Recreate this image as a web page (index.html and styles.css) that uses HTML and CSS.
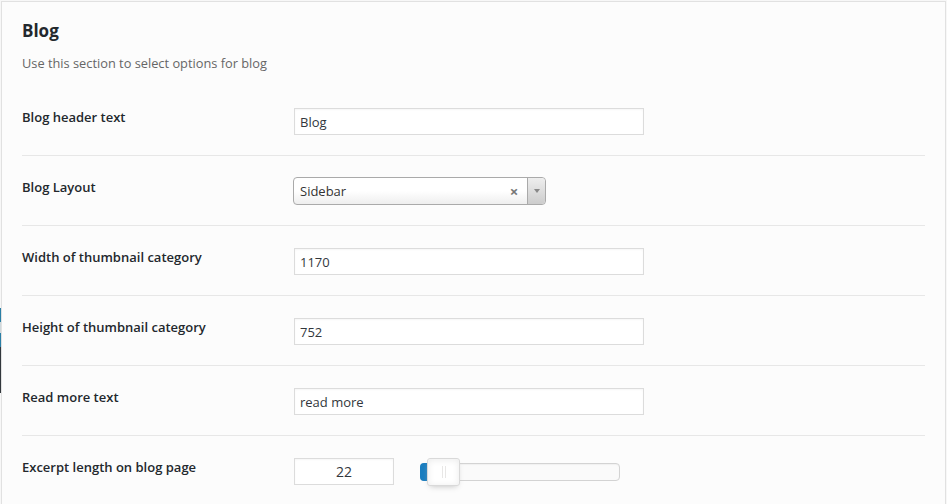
FILE: index.html
```html
<!DOCTYPE html>
<html lang="en">
<head>
<meta charset="utf-8">
<title>Blog options</title>
<link rel="stylesheet" href="styles.css">
</head>
<body>
<div class="admin-edge" aria-hidden="true">
  <span class="edge-blue"></span>
  <span class="edge-gap"></span>
  <span class="edge-blue"></span>
  <span class="edge-dark"></span>
</div>
<div class="panel">
  <h2 class="section-title">Blog</h2>
  <p class="section-desc">Use this section to select options for blog</p>
  <div class="form-table">
    <div class="row">
      <div class="label">Blog header text</div>
      <div class="field"><input class="text-input" type="text" value="Blog"></div>
    </div>
    <div class="row">
      <div class="label">Blog Layout</div>
      <div class="field">
        <div class="select2">
          <span class="select2-value">Sidebar</span>
          <span class="select2-clear">&#215;</span>
          <span class="select2-arrow"><span class="tri"></span></span>
        </div>
      </div>
    </div>
    <div class="row">
      <div class="label">Width of thumbnail category</div>
      <div class="field"><input class="text-input" type="text" value="1170"></div>
    </div>
    <div class="row">
      <div class="label">Height of thumbnail category</div>
      <div class="field"><input class="text-input" type="text" value="752"></div>
    </div>
    <div class="row">
      <div class="label">Read more text</div>
      <div class="field"><input class="text-input" type="text" value="read more"></div>
    </div>
    <div class="row">
      <div class="label">Excerpt length on blog page</div>
      <div class="field slider-field">
        <input class="num-input" type="text" value="22">
        <div class="slider">
          <div class="slider-connect"></div>
          <div class="slider-handle"><span class="grip"></span></div>
        </div>
      </div>
    </div>
  </div>
</div>
</body>
</html>
```
FILE: styles.css
```css
* { box-sizing: border-box; }
html, body { margin: 0; padding: 0; }
body {
  background: #f7f7f7;
  font-family: "Segoe UI", "Open Sans", "Noto Sans", sans-serif;
  color: #23282d;
  height: 504px;
  overflow: hidden;
  position: relative;
}
.admin-edge {
  position: absolute;
  left: 0;
  top: 308px;
  width: 1px;
  display: flex;
  flex-direction: column;
}
.edge-blue { display: block; height: 14px; background: #2a7fa6; }
.edge-gap { display: block; height: 11px; background: #cfd8dc; }
.edge-dark { display: block; height: 46px; background: #32373c; }
.panel {
  margin: 1px 1px 0 1px;
  border: 1px solid #e1e1e1;
  border-bottom: none;
  background: #fcfcfc;
  padding: 0 20px;
  height: 503px;
  overflow: hidden;
}
.section-title {
  margin: 0;
  padding-top: 17px;
  font-size: 17px;
  line-height: 24px;
  font-weight: 700;
  color: #23282d;
}
.section-desc {
  margin: 0;
  padding-top: 11px;
  font-size: 12.8px;
  line-height: 18px;
  color: #666;
  height: 43px;
}
.row {
  display: flex;
  align-items: flex-start;
  height: 70px;
  border-bottom: 1px solid #e7e7e7;
}
.row:last-child { border-bottom: none; height: auto; }
.label {
  width: 272px;
  flex: none;
  padding-top: 22px;
  font-size: 13px;
  line-height: 18px;
  font-weight: 600;
  color: #23282d;
}
.field { padding-top: 22px; }
.text-input, .num-input {
  display: block;
  width: 350px;
  height: 27px;
  margin: 0;
  padding: 0 5px;
  border: 1px solid #dcdcdc;
  box-shadow: inset 0 1px 2px rgba(0,0,0,0.04);
  background: #fff;
  font-family: inherit;
  font-size: 13px;
  color: #32373c;
  outline: none;
}
.select2 {
  display: flex;
  align-items: center;
  width: 253px;
  height: 28px;
  margin-left: -1px;
  margin-top: -1px;
  border: 1px solid #aaa;
  border-radius: 4px;
  background: linear-gradient(#fff 0%, #fff 50%, #eee 100%);
  font-size: 13px;
  color: #333;
}
.select2-value { flex: 1; padding-left: 6px; }
.select2-clear {
  width: 16px;
  text-align: center;
  color: #777;
  font-weight: 700;
  font-size: 15px;
  line-height: 1;
  margin-right: 5px;
}
.select2-arrow {
  width: 18px;
  align-self: stretch;
  border-left: 1px solid #aaa;
  border-radius: 0 4px 4px 0;
  background: linear-gradient(#eee, #ccc);
  display: flex;
  align-items: center;
  justify-content: center;
}
.tri {
  width: 0; height: 0;
  border-left: 3px solid transparent;
  border-right: 3px solid transparent;
  border-top: 4px solid #888;
}
.slider-field { display: flex; align-items: center; gap: 26px; }
.num-input {
  width: 100px;
  text-align: center;
  font-size: 14px;
}
.slider {
  position: relative;
  width: 200px;
  height: 18px;
  border: 1px solid #d3d3d3;
  border-radius: 4px;
  background: #fafafa;
  box-shadow: inset 0 1px 1px #f0f0f0;
  margin-top: 1px;
}
.slider-connect {
  position: absolute;
  left: -1px; top: -1px; bottom: -1px;
  width: 12px;
  background: #1a7dbf;
  border-radius: 4px 0 0 4px;
}
.slider-handle {
  position: absolute;
  left: 6px;
  top: -6px;
  width: 33px;
  height: 28px;
  border: 1px solid #d9d9d9;
  border-radius: 3px;
  background: #fff;
  box-shadow: inset 0 0 1px #fff, inset 0 1px 7px #ebebeb, 0 3px 6px -3px #bbb;
  display: flex;
  align-items: center;
  justify-content: center;
}
.grip {
  width: 4px;
  height: 12px;
  border-left: 1px solid #e8e7e6;
  border-right: 1px solid #e8e7e6;
}
```
